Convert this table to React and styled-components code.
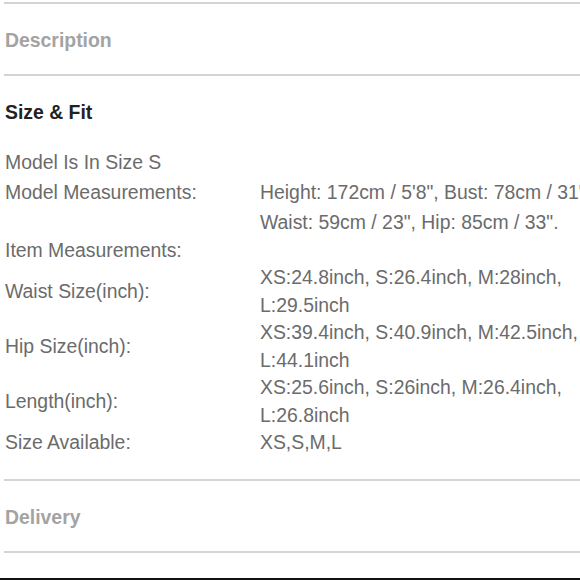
import React from 'react'
import styled, { createGlobalStyle } from 'styled-components'

const Global = createGlobalStyle`
  html, body {
    margin: 0;
    padding: 0;
    background: #fff;
    overflow: hidden;
  }
  body {
    font-family: "Liberation Sans", Arial, sans-serif;
  }
`

const Page = styled.div`
  width: 580px;
  height: 580px;
  display: flex;
  flex-direction: column;
  padding: 2px 0 0 4px;
  box-sizing: border-box;
  border-bottom: 2px solid #111;
  overflow: hidden;
`

const Section = styled.section`
  border-top: 2px solid #d4d4d4;
  ${p => p.$last && 'border-bottom: 2px solid #d4d4d4;'}
`

const Heading = styled.h3`
  margin: 0;
  padding: ${p => (p.$open ? '24px 0 0 1px' : '24px 0 22px 1px')};
  font-size: 19.4px;
  line-height: 24px;
  font-weight: bold;
  color: ${p => (p.$open ? '#222' : '#a3a3a3')};
`

const Specs = styled.div`
  display: grid;
  grid-template-columns: 255px 345px;
  align-items: center;
  margin: 25px 0 22px 1px;
  font-size: 19.4px;
  line-height: 27.5px;
  color: #6b6b6b;
`

const Label = styled.div`
  white-space: nowrap;
  align-self: ${p => (p.$top ? 'start' : 'center')};
  line-height: ${p => (p.$top ? '30px' : '27.5px')};
`

const Value = styled.div`
  line-height: ${p => (p.$tall ? '30px' : '27.5px')};
`

const rows = [
  ['Model Is In Size S', ''],
  ['Model Measurements:', 'Height: 172cm / 5\'8", Bust: 78cm / 31", Waist: 59cm / 23", Hip: 85cm / 33".', true],
  ['Item Measurements:', ''],
  ['Waist Size(inch):', 'XS:24.8inch, S:26.4inch, M:28inch, L:29.5inch'],
  ['Hip Size(inch):', 'XS:39.4inch, S:40.9inch, M:42.5inch, L:44.1inch'],
  ['Length(inch):', 'XS:25.6inch, S:26inch, M:26.4inch, L:26.8inch'],
  ['Size Available:', 'XS,S,M,L'],
]

export default function App() {
  return (
    <>
      <Global />
      <Page>
        <Section>
          <Heading>Description</Heading>
        </Section>
        <Section>
          <Heading $open>Size &amp; Fit</Heading>
          <Specs>
            {rows.map(([label, value, top]) => (
              <React.Fragment key={label}>
                <Label $top={top}>{label}</Label>
                <Value $tall={top}>{value}</Value>
              </React.Fragment>
            ))}
          </Specs>
        </Section>
        <Section $last>
          <Heading>Delivery</Heading>
        </Section>
      </Page>
    </>
  )
}
